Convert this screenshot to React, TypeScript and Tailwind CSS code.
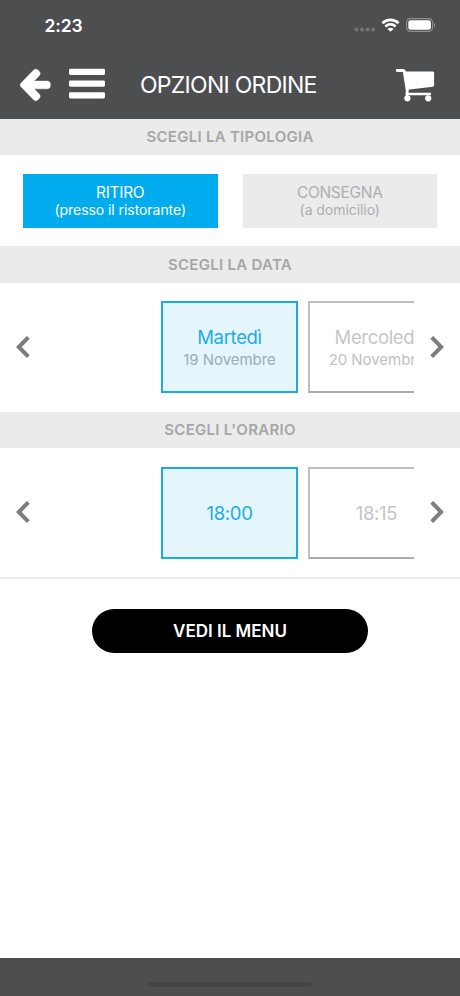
import React, { useState } from 'react';

interface SlotOption {
  title: string;
  subtitle?: string;
}

const dates: SlotOption[] = [
  { title: 'Martedì', subtitle: '19 Novembre' },
  { title: 'Mercoledì', subtitle: '20 Novembre' },
];

const times: SlotOption[] = [{ title: '18:00' }, { title: '18:15' }];

const StatusBar: React.FC = () => (
  <div className="flex h-[52px] items-center justify-between pl-[44.5px] pr-[24px]">
    <span className="text-[17.5px] font-semibold leading-none tracking-[-0.1px] text-white">2:23</span>
    <div className="flex items-center">
      <svg width="22" height="5" viewBox="0 0 22 5" className="mt-[7px] fill-[#737475]">
        <circle cx="2.4" cy="2.5" r="2" />
        <circle cx="8" cy="2.5" r="2" />
        <circle cx="13.6" cy="2.5" r="2" />
        <circle cx="19.2" cy="2.5" r="2" />
      </svg>
      <svg width="19" height="14" viewBox="0 0 19 14" className="ml-[5px] mr-[6px] mt-[-2px] fill-none stroke-white stroke-[2.7]">
        <path d="M1.4 5.2C6 .8 13 .8 17.6 5.2" />
        <path d="M4.4 8.4c3-2.7 7.2-2.7 10.2 0" />
        <path d="M9.5 13.8 6.5 10.9c1.7-1.4 4.3-1.4 6 0z" className="fill-white stroke-none" />
      </svg>
      <svg width="30" height="14" viewBox="0 0 30 14" className="mt-[-2px]">
        <rect x=".6" y=".6" width="26" height="12.8" rx="3.8" fill="none" stroke="#8d8e8f" strokeWidth="1.1" />
        <rect x="2.3" y="2.3" width="22.6" height="9.4" rx="2.2" fill="#fff" />
        <path d="M27.8 4.8v4.6c1.8-.8 1.8-3.8 0-4.6z" fill="#8d8e8f" />
      </svg>
    </div>
  </div>
);

const NavBar: React.FC = () => (
  <div className="flex h-[66px] items-center pl-[20px] pr-[25px]">
    <button aria-label="Indietro">
      <svg width="31" height="34" viewBox="0 0 31 34" className="fill-white stroke-white">
        <path
          d="M.8 15.4 13.4 2.3c1.5-1.5 3.1-1.5 4.5-.2l1.3 1.3c1.3 1.4 1.3 3 0 4.4L14.1 13.1h13c2 0 3.2 1.2 3.2 3v1.7c0 1.8-1.2 3-3.2 3h-13l5.1 5.3c1.3 1.4 1.3 3 0 4.4l-1.3 1.3c-1.4 1.3-3 1.3-4.5-.2L.8 18.5c-.9-1-.9-2.1 0-3.1z"
          strokeWidth=".5"
        />
      </svg>
    </button>
    <button aria-label="Menu" className="ml-[18px] mt-[-3px]">
      <svg width="36" height="31" viewBox="0 0 36 31" className="fill-white">
        <rect y=".8" width="36" height="6.2" rx="1.4" />
        <rect y="12.5" width="36" height="6.2" rx="1.4" />
        <rect y="24.3" width="36" height="6.2" rx="1.4" />
      </svg>
    </button>
    <h1 className="ml-[35px] whitespace-nowrap text-[23px] leading-none tracking-[-0.72px] text-white">
      OPZIONI ORDINE
    </h1>
    <button aria-label="Carrello" className="ml-auto">
      <svg width="40" height="34" viewBox="0 0 40 34" className="fill-white">
        <path d="M2.2 2.5h5.9c.7 0 1 .3 1.2 1l3 19.2-.4 4" fill="none" stroke="#fff" strokeWidth="2.9" strokeLinecap="round" strokeLinejoin="round" />
        <path d="M8.6 3.6h29c.9 0 1.5.6 1.5 1.5v12.2c0 .9-.5 1.4-1.4 1.5l-25.2 2.9z" />
        <path d="M12.3 26h22.6" fill="none" stroke="#fff" strokeWidth="2.6" strokeLinecap="round" />
        <circle cx="12.4" cy="30.3" r="3.1" />
        <circle cx="33.2" cy="30.3" r="3.1" />
      </svg>
    </button>
  </div>
);

const SectionTitle: React.FC<{ children: React.ReactNode }> = ({ children }) => (
  <h2 className="flex h-[36.5px] items-center justify-center bg-[#ebebeb] pt-px text-[15px] font-semibold tracking-[0.28px] text-[#a5a6a8]">
    {children}
  </h2>
);

interface TypeButtonProps {
  label: string;
  hint: string;
  active: boolean;
  onClick: () => void;
}

const TypeButton: React.FC<TypeButtonProps> = ({ label, hint, active, onClick }) => (
  <button
    onClick={onClick}
    className={`flex h-[54px] flex-1 flex-col items-center justify-center pt-px ${
      active ? 'bg-[#00aced] text-white' : 'bg-[#ebebeb] text-[#adaeb0]'
    }`}
  >
    <span className="text-[15.5px] leading-[18px] tracking-[-0.3px]">{label}</span>
    <span className="text-[14px] leading-[16px] tracking-[-0.06px]">{hint}</span>
  </button>
);

const Chevron: React.FC<{ direction: 'left' | 'right' }> = ({ direction }) => (
  <svg width="14" height="23" viewBox="0 0 14 23" className="shrink-0 fill-none stroke-[#7d7d7d] stroke-[4]">
    <path d={direction === 'left' ? 'M12.3 1.3 2.8 11l9.5 9.7' : 'M1.7 1.3l9.5 9.7-9.5 9.7'} />
  </svg>
);

interface CarouselProps {
  options: SlotOption[];
  selected: number;
  onSelect: (index: number) => void;
}

const Carousel: React.FC<CarouselProps> = ({ options, selected, onSelect }) => (
  <div className="flex h-[129px] items-center justify-between px-[16px]">
    <Chevron direction="left" />
    <div className="flex w-[368px] gap-[10px] overflow-hidden pl-[115px]">
      {options.map((option, index) => (
        <button
          key={option.title}
          onClick={() => onSelect(index)}
          className={`flex h-[92px] w-[137px] shrink-0 flex-col items-center justify-center whitespace-nowrap border-2 pt-[2px] ${
            index === selected ? 'border-[#1cace0] bg-[#e4f5fc]' : 'border-[#bfbfbf] border-b-[#acacac] bg-white'
          }`}
        >
          <span
            className={`text-[18.5px] leading-[23px] tracking-[-0.33px] ${
              index === selected ? 'text-[#1cace8]' : 'text-[#c6c6c6]'
            }`}
          >
            {option.title}
          </span>
          {option.subtitle && (
            <span
              className={`text-[15px] leading-[21px] tracking-[-0.05px] ${
                index === selected ? 'text-[#9eabb3]' : 'text-[#c2c2c2]'
              }`}
            >
              {option.subtitle}
            </span>
          )}
        </button>
      ))}
    </div>
    <Chevron direction="right" />
  </div>
);

const App: React.FC = () => {
  const [orderType, setOrderType] = useState<'pickup' | 'delivery'>('pickup');
  const [dateIndex, setDateIndex] = useState(0);
  const [timeIndex, setTimeIndex] = useState(0);

  return (
    <div className="flex h-[996px] w-[460px] flex-col overflow-hidden bg-white font-['Inter',sans-serif]">
      <header className="h-[118.5px] shrink-0 bg-[#4d4e50]">
        <StatusBar />
        <NavBar />
      </header>

      <main className="flex-1">
        <SectionTitle>SCEGLI LA TIPOLOGIA</SectionTitle>
        <div className="flex h-[91px] items-center gap-[25px] px-[23px]">
          <TypeButton
            label="RITIRO"
            hint="(presso il ristorante)"
            active={orderType === 'pickup'}
            onClick={() => setOrderType('pickup')}
          />
          <TypeButton
            label="CONSEGNA"
            hint="(a domicilio)"
            active={orderType === 'delivery'}
            onClick={() => setOrderType('delivery')}
          />
        </div>

        <SectionTitle>SCEGLI LA DATA</SectionTitle>
        <Carousel options={dates} selected={dateIndex} onSelect={setDateIndex} />

        <SectionTitle>SCEGLI L'ORARIO</SectionTitle>
        <Carousel options={times} selected={timeIndex} onSelect={setTimeIndex} />

        <div className="flex justify-center border-t-2 border-[#ebebeb] pt-[30px]">
          <button className="h-[43.5px] w-[276px] rounded-full bg-black pt-[2px] text-[17px] font-semibold text-white">
            VEDI IL MENU
          </button>
        </div>
      </main>

      <footer className="flex h-[38px] shrink-0 justify-center bg-[#4d4e50] pt-[23.5px]">
        <div className="h-[5px] w-[164px] rounded-full bg-[#444547]" />
      </footer>
    </div>
  );
};

export default App;
